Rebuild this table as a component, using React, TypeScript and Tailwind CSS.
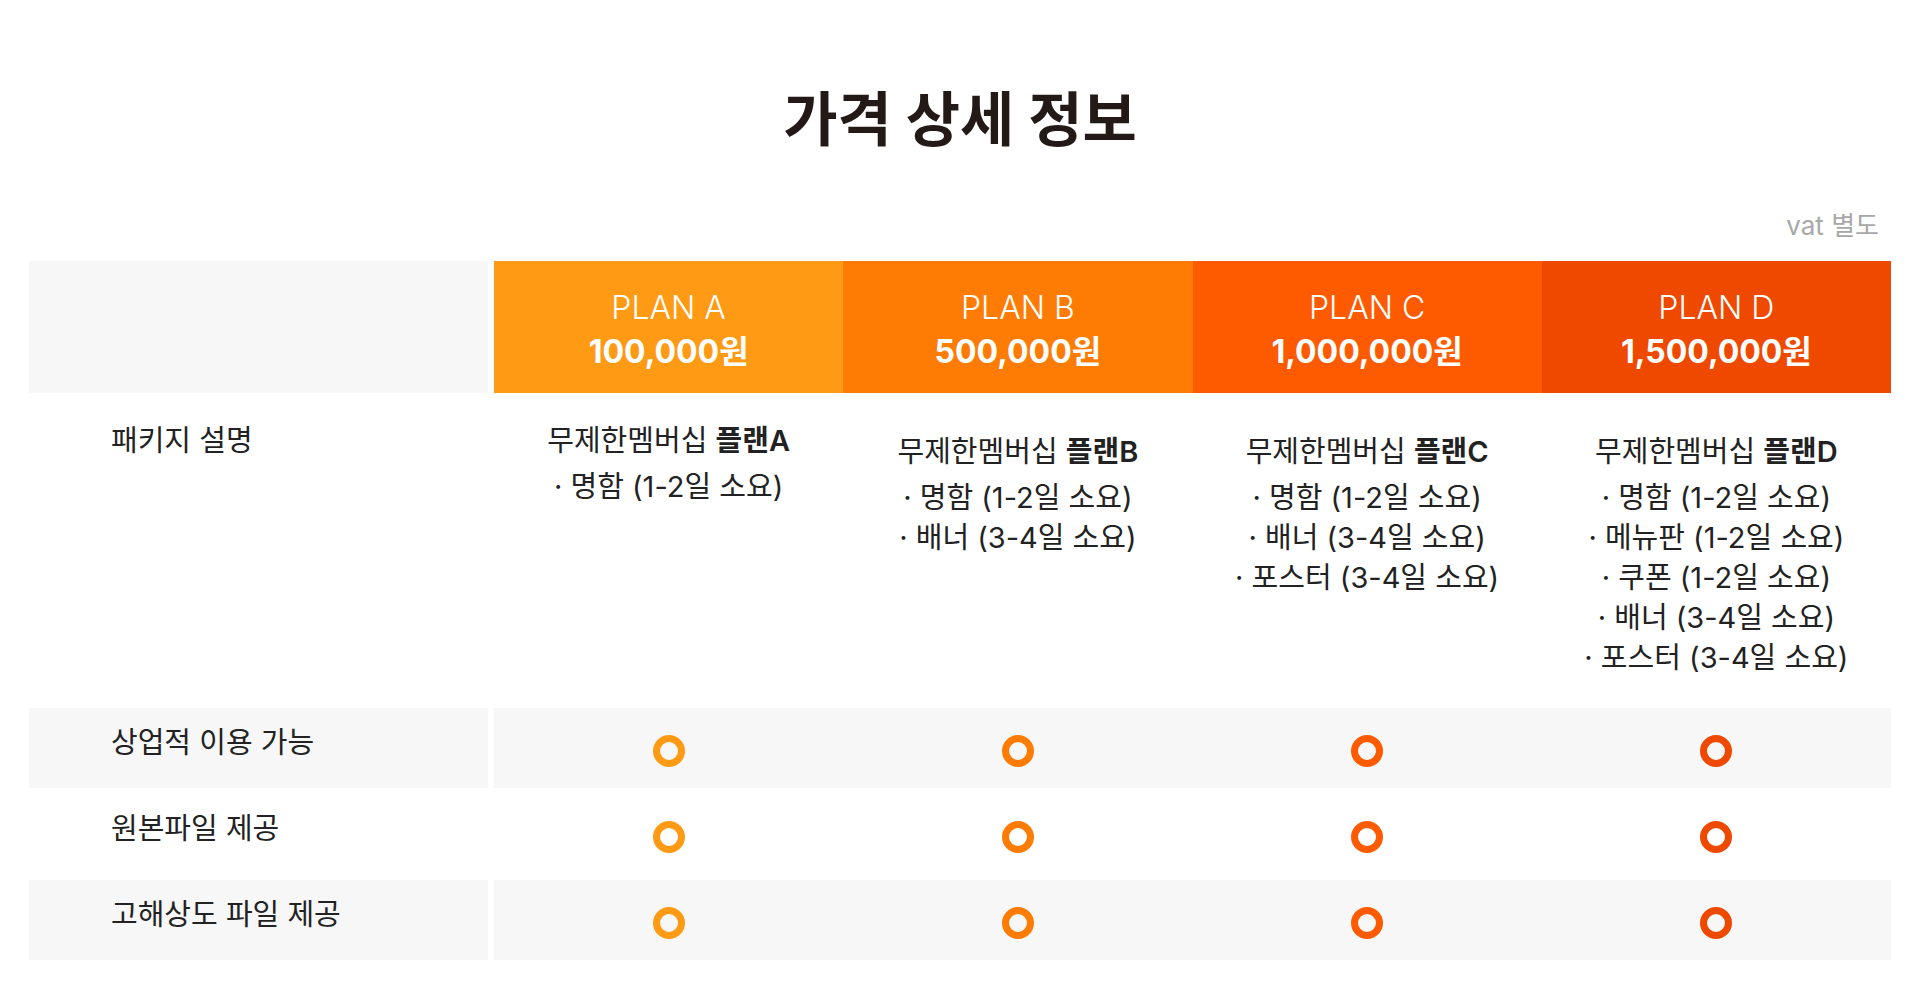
import React from 'react';

type Plan = {
  name: string;
  price: string;
  letter: string;
  bg: string;
  ring: string;
  items: string[];
  top: string;
};

const plans: Plan[] = [
  {
    name: 'PLAN A',
    price: '100,000원',
    letter: 'A',
    bg: 'bg-[#fe9a14]',
    ring: 'border-[#fe9a14]',
    items: ['명함 (1-2일 소요)'],
    top: 'pt-[30px]',
  },
  {
    name: 'PLAN B',
    price: '500,000원',
    letter: 'B',
    bg: 'bg-[#fe7b04]',
    ring: 'border-[#fe7b04]',
    items: ['명함 (1-2일 소요)', '배너 (3-4일 소요)'],
    top: 'pt-[41px]',
  },
  {
    name: 'PLAN C',
    price: '1,000,000원',
    letter: 'C',
    bg: 'bg-[#fe5a00]',
    ring: 'border-[#fe5a00]',
    items: ['명함 (1-2일 소요)', '배너 (3-4일 소요)', '포스터 (3-4일 소요)'],
    top: 'pt-[41px]',
  },
  {
    name: 'PLAN D',
    price: '1,500,000원',
    letter: 'D',
    bg: 'bg-[#ef4900]',
    ring: 'border-[#ef4900]',
    items: [
      '명함 (1-2일 소요)',
      '메뉴판 (1-2일 소요)',
      '쿠폰 (1-2일 소요)',
      '배너 (3-4일 소요)',
      '포스터 (3-4일 소요)',
    ],
    top: 'pt-[41px]',
  },
];

const features = ['상업적 이용 가능', '원본파일 제공', '고해상도 파일 제공'];

const App: React.FC = () => {
  return (
    <div className="min-h-screen bg-white font-[Inter,'Noto_Sans_CJK_KR',sans-serif] text-[#222222]">
      <div className="px-[29px] pt-[90px] pb-[36px]">
        <h1 className="text-center text-[59px] font-bold leading-none text-[#231916]">
          가격 상세 정보
        </h1>

        <div className="mt-[64px] flex justify-end pr-[12px] text-[26px] leading-none text-[#a8a8a8]">
          vat 별도
        </div>

        {/* Table */}
        <div className="mt-[22px] flex flex-col">
          {/* Header */}
          <div className="grid h-[132px] grid-cols-[459px_1fr] gap-x-[6px]">
            <div className="bg-[#f7f7f7]" />
            <div className="grid grid-cols-4">
              {plans.map((p) => (
                <div
                  key={p.name}
                  className={`${p.bg} flex flex-col items-center pt-[27px] text-white`}
                >
                  <div className="text-[32px] font-light leading-[40px]">{p.name}</div>
                  <div className="mt-[3px] text-[32px] font-bold leading-[42px]">{p.price}</div>
                </div>
              ))}
            </div>
          </div>

          {/* Package description */}
          <div className="grid h-[309px] grid-cols-[459px_1fr] gap-x-[6px]">
            <div className="pl-[82px] pt-[30px] text-[29px] leading-[36px]">패키지 설명</div>
            <div className="grid grid-cols-4">
              {plans.map((p) => (
                <div
                  key={p.name}
                  className={`flex flex-col items-center text-[29px] leading-[40px] ${p.top}`}
                >
                  <div className="mb-[8px] leading-[36px]">
                    무제한멤버십 <span className="font-semibold">플랜{p.letter}</span>
                  </div>
                  {p.items.map((it) => (
                    <div key={it}>· {it}</div>
                  ))}
                </div>
              ))}
            </div>
          </div>

          {/* Feature rows */}
          <div className="mt-[6px] flex flex-col gap-y-[6px]">
            {features.map((f, i) => (
              <div key={f} className="grid h-[80px] grid-cols-[459px_1fr] gap-x-[6px]">
                <div
                  className={`pl-[82px] pt-[17px] text-[29px] leading-[36px] ${
                    i % 2 === 0 ? 'bg-[#f7f7f7]' : 'bg-white'
                  }`}
                >
                  {f}
                </div>
                <div
                  className={`grid grid-cols-4 ${i % 2 === 0 ? 'bg-[#f7f7f7]' : 'bg-white'}`}
                >
                  {plans.map((p) => (
                    <div key={p.name} className="flex items-center justify-center pt-[6px]">
                      <span className={`h-[32px] w-[32px] rounded-full border-[7px] ${p.ring}`} />
                    </div>
                  ))}
                </div>
              </div>
            ))}
          </div>
        </div>
      </div>
    </div>
  );
};

export default App;
